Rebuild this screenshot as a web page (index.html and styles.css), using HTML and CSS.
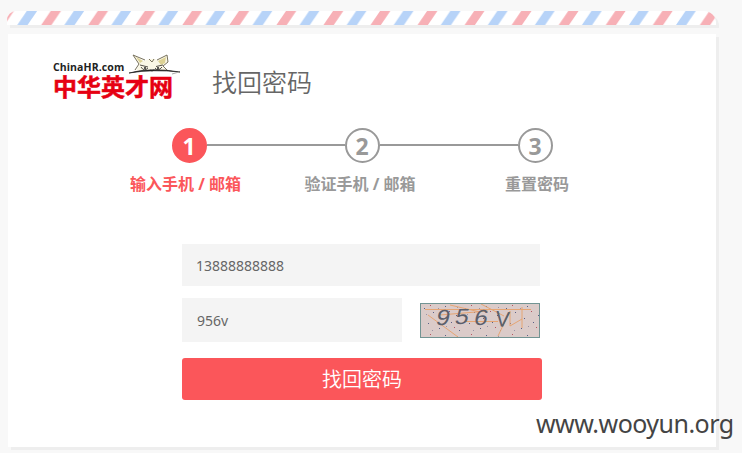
FILE: index.html
```html
<!DOCTYPE html>
<html lang="zh-CN">
<head>
<meta charset="utf-8">
<title>找回密码</title>
<link rel="stylesheet" href="styles.css">
</head>
<body>
<div class="airmail">
  <svg width="709" height="14" viewBox="0 0 709 14">
    <defs>
      <pattern id="stripes" x="10.3" y="0" width="47.05" height="14" patternUnits="userSpaceOnUse">
        <path d="M0 14L9.5 0H19.8L10.3 14Z" fill="#b7d3f8"/>
        <path d="M23.9 14L33.4 0H43.7L34.2 14Z" fill="#f7b0b6"/>
      </pattern>
    </defs>
    <rect width="709" height="14" fill="url(#stripes)"/>
  </svg>
</div>
<main class="card">
  <header class="header">
    <div class="logo">
      <div class="logo-en">ChinaHR.com</div>
      <div class="logo-cn">中华英才网</div>
      <svg class="fox" width="58" height="26" viewBox="0 0 58 26">
        <path d="M8 2L19 8Q26 4 32 7L42 2L43 9L38 13L42 18Q28 15 11 18L14 12Z" fill="#faf7e6"/>
        <path d="M11 4L18 8L15 10ZM33 8L41 4L40 10L36 12Z" fill="#ddd294"/>
        <path d="M14 11L8 2L20 7M24 6L27 9L29 6M32 7L42 2L43 9L38 13L43 18M14 11L10 17" fill="none" stroke="#77715c" stroke-width="1"/>
        <path d="M15 12L23 14M31 13.500L38 12M16 14Q19 19 23 15M30 15Q33 19 37 14M25 17L27 18L29 17" fill="none" stroke="#55514a" stroke-width="1"/>
        <circle cx="20" cy="15" r="1" fill="#222"/><circle cx="33" cy="15" r="1" fill="#222"/>
        <path d="M4 20Q26 14 55 19Q28 16 4 20Z" fill="#222" stroke="#222" stroke-width=".7"/>
        <path d="M54 19L47 21" fill="none" stroke="#aaa" stroke-width="1"/>
      </svg>
    </div>
    <h1 class="title">找回密码</h1>
  </header>
  <ol class="steps">
    <li class="step active"><span class="num">1</span><span class="label">输入手机 / 邮箱</span></li>
    <li class="step"><span class="num">2</span><span class="label">验证手机 / 邮箱</span></li>
    <li class="step last"><span class="num">3</span><span class="label">重置密码</span></li>
  </ol>
  <form class="form">
    <input class="field phone" type="text" value="13888888888">
    <div class="row">
      <input class="field code" type="text" value="956v">
      <svg class="captcha" width="120" height="35" viewBox="0 0 120 35">
        <defs>
          <pattern id="specks" width="41" height="29" patternUnits="userSpaceOnUse">
            <path d="M4 5.500h1M13 9.500h1M25 3.500h1M36 12.500h1M8 20.500h1M19 25.500h1M31 19.500h1M39 27.500h1M22 15.500h1" stroke="#596087"/>
            <path d="M10 2.500h1M29 8.500h1M34 24.500h1" stroke="#b65460"/>
            <path d="M18 5.500h1M6 11.500h1M26 23.500h1M37 4.500h1M12 27.500h1" stroke="#9a92a6"/>
          </pattern>
        </defs>
        <rect width="120" height="35" fill="#dbcbc9"/>
        <rect width="120" height="35" fill="url(#specks)"/>
        <path d="M5 6.500H111M8 12L38 34M20 12L68 8M30 2L60 9M46 18.500H78M61 1L84 13M78 33L90 8V23M90 23L102 16M102 4V25" fill="none" stroke="#e6a573"/>
        <g class="captcha-text">
          <text transform="translate(15 22) skewX(-12) scale(1.1 1)">9</text>
          <text transform="translate(34 20.500) skewX(-12) scale(1.1 1)">5</text>
          <text transform="translate(53 21.500) skewX(-12) scale(1.1 1)">6</text>
          <text transform="translate(75 23) rotate(5) scale(.95 1)">V</text>
        </g>
        <rect x=".5" y=".5" width="119" height="34" fill="none" stroke="#729493"/>
      </svg>
    </div>
    <button class="submit" type="button">找回密码</button>
  </form>
</main>
<div class="watermark">www.wooyun.org</div>
</body>
</html>
```
FILE: styles.css
```css
* { box-sizing: border-box; }
body {
  margin: 0;
  padding: 11px 0 0 7px;
  height: 453px;
  overflow: hidden;
  background: #f8f8f8;
  font-family: "Noto Sans", "Noto Sans CJK SC", sans-serif;
  color: #666;
}
.airmail {
  width: 709px;
  height: 14px;
  background: #fff;
  border-radius: 9px 12px 0 0;
  overflow: hidden;
  box-shadow: 3px 3px 0 #eee;
}
.airmail svg { display: block; }
.card {
  width: 708px;
  height: 413px;
  margin: 9px 0 0 1px;
  background: #fff;
  box-shadow: 3px 3px 0 #eee;
}
.header {
  display: flex;
  height: 94px;
  padding: 19px 0 0 45px;
}
.logo {
  position: relative;
  width: 130px;
  height: 48px;
}
.logo-en {
  padding-top: 8px;
  font: bold 10.5px/12px "Open Sans", sans-serif;
  letter-spacing: .1px;
  color: #222;
}
.logo-cn {
  margin-top: 1px;
  font: bold 24px/24px "Noto Sans CJK SC", sans-serif;
  color: #e60012;
  -webkit-text-stroke: .5px #e60012;
  white-space: nowrap;
}
.fox { position: absolute; left: 72px; top: 0; }
.title {
  margin: 10px 0 0 29px;
  font: 350 25px/36px "Noto Sans CJK SC", sans-serif;
  color: #666;
}
.steps {
  display: grid;
  grid-template-columns: 173px 173px 35px;
  height: 116px;
  margin: 0;
  padding: 0 0 0 164px;
  list-style: none;
}
.step {
  display: grid;
  grid-template-columns: 35px 1fr;
  grid-template-rows: 35px 42px;
  align-content: start;
  color: #999;
}
.step::after {
  content: "";
  grid-area: 1 / 2;
  margin-top: 16px;
  height: 2px;
  background: #999;
}
.step.last::after { display: none; }
.num {
  grid-area: 1 / 1;
  border: 2px solid #999;
  border-radius: 50%;
  padding-right: 1px;
  font: bold 23px/32px "Noto Sans", sans-serif;
  text-align: center;
}
.active .num { border-color: #fb565a; background: #fb565a; color: #fff; }
.label {
  grid-area: 2 / 1;
  justify-self: center;
  margin: 9px 8px 0 0;
  font: bold 16px/24px "Noto Sans", "Noto Sans CJK SC", sans-serif;
  white-space: nowrap;
}
.step:nth-child(2) .label { margin-right: 5px; }
.step.last .label { margin: 9px 0 0 3px; }
.active .label { color: #fb565a; }
.form { width: 360px; margin-left: 174px; }
.field {
  display: block;
  border: 0;
  padding: 0 14px;
  background: #f4f4f4;
  font: 14px "Noto Sans", sans-serif;
  color: #666;
}
.phone { width: 358px; height: 42px; }
.row {
  display: flex;
  align-items: center;
  gap: 18px;
  margin: 12px 0 16px;
}
.code { width: 220px; height: 44px; padding-left: 15px; }
.captcha { display: block; }
.captcha-text {
  font: 22px "Liberation Sans", sans-serif;
  fill: #5b5f6b;
}
.submit {
  display: block;
  width: 360px;
  height: 42px;
  border: 0;
  border-radius: 3px;
  padding: 0;
  background: #fb565a;
  color: #fff;
  font: 350 20px/42px "Noto Sans CJK SC", sans-serif;
}
.watermark {
  position: absolute;
  left: 536px;
  top: 406px;
  font: 25px/34px "Noto Sans", sans-serif;
  letter-spacing: -.53px;
  color: #444;
}
```
